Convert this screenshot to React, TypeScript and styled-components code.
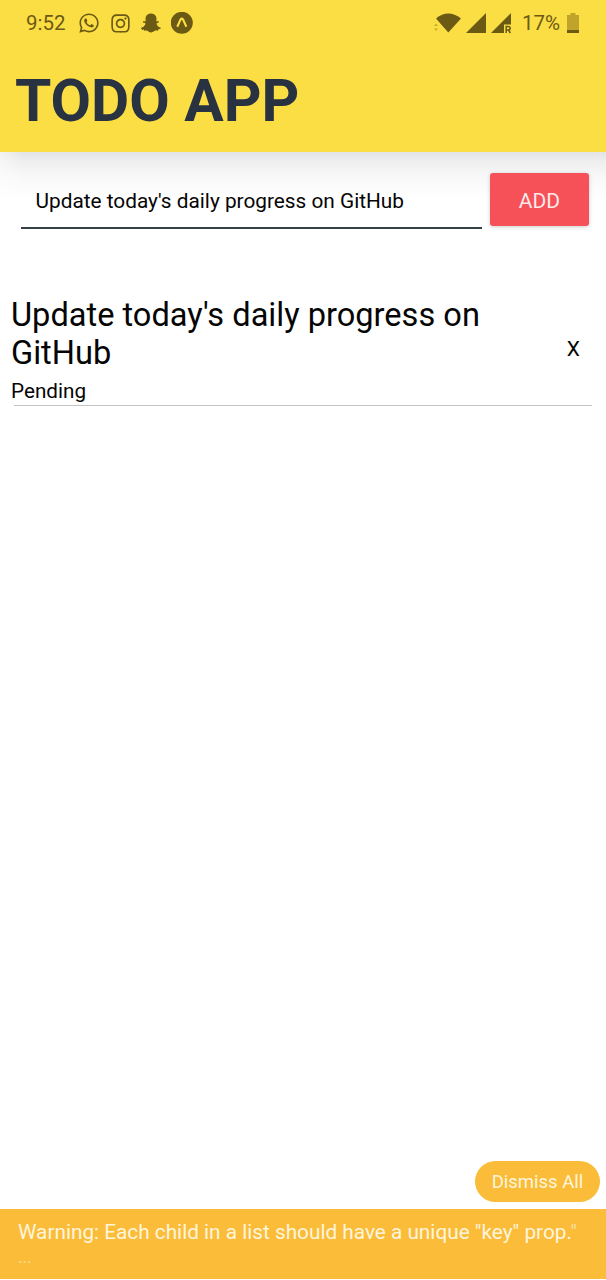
import React from 'react';
import styled, { createGlobalStyle } from 'styled-components';
import { FaWhatsapp, FaInstagram, FaSnapchatGhost } from 'react-icons/fa';

const GlobalStyle = createGlobalStyle`
  * { box-sizing: border-box; }
  body { margin: 0; background: #fff; font-family: Roboto, sans-serif; color: #050505; }
`;

const Screen = styled.div`
  display: flex;
  flex-direction: column;
  width: 606px;
  height: 1280px;
  overflow: hidden;
  background: #fff;
`;

const Header = styled.header`
  height: 152px;
  flex: none;
  background: #fbde44;
`;

const StatusBar = styled.div`
  display: flex;
  align-items: center;
  justify-content: space-between;
  height: 46px;
  padding: 0 26px;
  color: #6b5a14;
  font-size: 20.5px;
`;

const StatusGroup = styled.div<{ $gap: number }>`
  display: flex;
  align-items: center;
  gap: ${(p) => p.$gap}px;
  svg { display: block; flex: none; }
`;

const Clock = styled.span`
  width: 42px;
  white-space: nowrap;
`;

const Percent = styled.span`
  margin: 0 3px 0 6px;
`;

const Title = styled.h1`
  margin: 21px 0 0 15px;
  font-size: 58.7px;
  line-height: 68px;
  font-weight: 700;
  color: #283241;
`;

const EntryForm = styled.div`
  display: flex;
  height: 100px;
  flex: none;
  padding: 21px 17px 0 21px;
  background:
    linear-gradient(90deg, rgba(255, 255, 255, 0.5), rgba(255, 255, 255, 0) 24px),
    linear-gradient(#e3e4e6 0, #efeff0 10px, #f8f8f8 25px, #fff 48px);
`;

const EntryInput = styled.div`
  width: 461px;
  height: 56px;
  padding-left: 14.5px;
  border-bottom: 2px solid #364147;
  font-size: 20.8px;
  line-height: 57px;
  white-space: nowrap;
`;

const AddButton = styled.button`
  width: 99px;
  height: 52.5px;
  margin-left: 8px;
  padding: 3px 0 0;
  border: 0;
  border-radius: 3px;
  background: #f65058;
  box-shadow: 0 1px 4px rgba(0, 0, 0, 0.2);
  color: #fdeaea;
  font: 400 21px Roboto, sans-serif;
`;

const TodoItem = styled.div`
  display: flex;
  justify-content: space-between;
  margin: 44px 14px 0 11px;
  height: 110px;
`;

const TodoText = styled.div`
  width: 500px;
`;

const TodoTitle = styled.div`
  font-size: 32.6px;
  line-height: 38px;
`;

const TodoStatus = styled.div`
  padding-top: 7px;
  font-size: 20.7px;
  line-height: 24px;
`;

const RemoveButton = styled.button`
  margin: 0;
  padding: 0 12px 5px;
  border: 0;
  background: none;
  color: inherit;
  font: 400 21px Roboto, sans-serif;
`;

const Divider = styled.div`
  height: 1px;
  margin: -1px 14px 0;
  flex: none;
  background: #c3c3c3;
`;

const Warnings = styled.div`
  display: flex;
  flex-direction: column;
  align-items: flex-end;
  gap: 7px;
  margin-top: auto;
  padding-bottom: 1px;
`;

const DismissButton = styled.button`
  width: 125px;
  height: 41px;
  margin-right: 6px;
  padding: 0;
  border: 0;
  border-radius: 21px;
  background: #fabc39;
  color: #fff5dc;
  font: 400 18.5px Roboto, sans-serif;
`;

const WarningBar = styled.div`
  width: 100%;
  height: 70px;
  padding: 9px 18px 0;
  background: #fabc39;
  color: #fff5dc;
  font-size: 20.78px;
  line-height: 28px;
  white-space: nowrap;
`;

const Quote = styled.span`
  opacity: 0.6;
`;

const Ellipsis = styled.div`
  font-size: 17px;
  line-height: 22px;
  opacity: 0.6;
`;

const ExpoIcon = () => (
  <svg width="23" height="23" viewBox="0 0 23 23">
    <circle cx="10.8" cy="10.8" r="11" fill="currentColor" />
    <path d="M6.300 14.800 9.500 7.600q1.300-2 2.600 0l3.200 7.200" fill="none" stroke="#fbde44" strokeWidth="2.1" />
    <path d="m8.400 15 2.400-5 2.400 5" fill="currentColor" />
  </svg>
);

const WifiIcon = () => (
  <svg width="28" height="20" viewBox="0 0 28 20">
    <path d="M2 5.500Q14-4.500 27 5.500L14.300 19.500Z" fill="currentColor" />
    <path d="m0 13 2-2.500 2 2.500zm0 2.500h4l-2 2.500z" fill="#c9ae2d" />
  </svg>
);

const SignalIcon = ({ roaming = false }: { roaming?: boolean }) => (
  <svg width="21" height="21" viewBox="0 0 21 21">
    <path d={roaming ? 'M0 20 20 0V11.500H13V20Z' : 'M0 20 20 0V20Z'} fill="currentColor" />
    {roaming && (
      <path d="M15.200 20V13.500h2q2 0 2 1.750t-2 1.750h-2m2.200 0 2 3" fill="none" stroke="currentColor" strokeWidth="1.500" />
    )}
  </svg>
);

const BatteryIcon = () => (
  <svg width="13" height="20" viewBox="0 0 13 20">
    <path d="M3.500 0h5v2H12v18H0V2h3.500z" fill="#bfa32b" />
    <path d="M0 17h12v3H0z" fill="currentColor" />
  </svg>
);

export default function App() {
  return (
    <Screen>
      <GlobalStyle />
      <Header>
        <StatusBar>
          <StatusGroup $gap={10}>
            <Clock>9:52</Clock>
            <FaWhatsapp size={22} />
            <FaInstagram size={21} />
            <FaSnapchatGhost size={20} />
            <ExpoIcon />
          </StatusGroup>
          <StatusGroup $gap={4}>
            <WifiIcon />
            <SignalIcon />
            <SignalIcon roaming />
            <Percent>17%</Percent>
            <BatteryIcon />
          </StatusGroup>
        </StatusBar>
        <Title>TODO APP</Title>
      </Header>
      <EntryForm>
        <EntryInput>Update today's daily progress on GitHub</EntryInput>
        <AddButton>ADD</AddButton>
      </EntryForm>
      <TodoItem>
        <TodoText>
          <TodoTitle>Update today's daily progress on GitHub</TodoTitle>
          <TodoStatus>Pending</TodoStatus>
        </TodoText>
        <RemoveButton>X</RemoveButton>
      </TodoItem>
      <Divider />
      <Warnings>
        <DismissButton>Dismiss All</DismissButton>
        <WarningBar>
          Warning: Each child in a list should have a unique "key" prop.<Quote>"</Quote>
          <Ellipsis>...</Ellipsis>
        </WarningBar>
      </Warnings>
    </Screen>
  );
}
